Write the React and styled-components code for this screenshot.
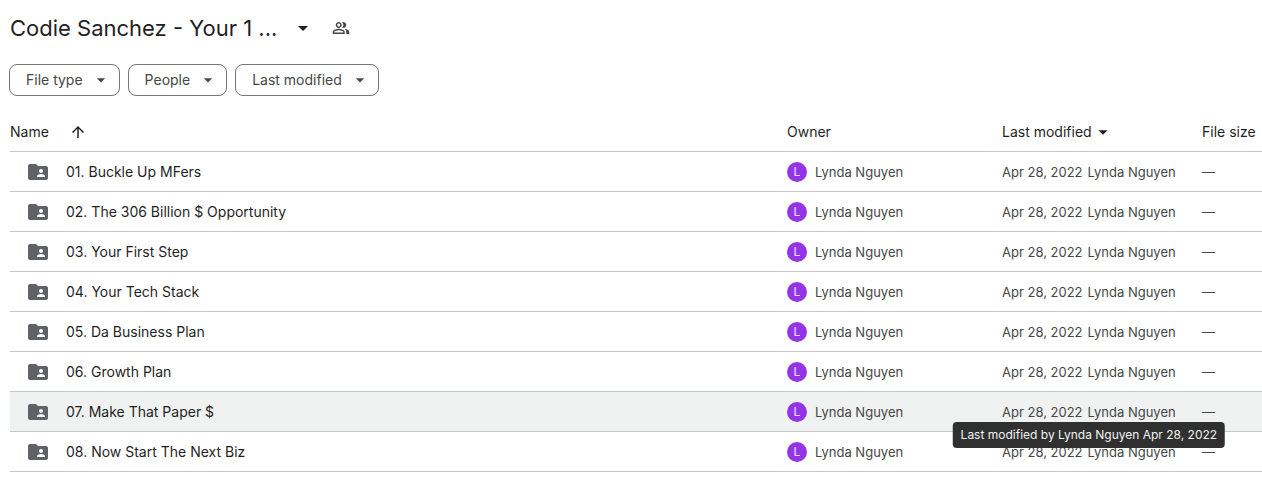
import React from "react";
import styled, { createGlobalStyle } from "styled-components";
import { MdArrowDropDown, MdArrowUpward, MdOutlinePeopleAlt } from "react-icons/md";

const GlobalStyle = createGlobalStyle`
  * {
    box-sizing: border-box;
  }
  body {
    margin: 0;
    background-color: #fff;
    color: #1f1f1f;
    font-family: Inter, Roboto, sans-serif;
    font-size: 14px;
    line-height: 20px;
  }
  button {
    border: 0;
    padding: 0;
    background: none;
    color: inherit;
    font: inherit;
    cursor: pointer;
  }
  svg {
    display: block;
    flex: none;
  }
`;
const Page = styled.main`
  padding-left: 10px;
`;
const TitleBar = styled.header`
  display: flex;
  align-items: center;
  gap: 17px;
  height: 56px;
`;
const TitleButton = styled.button`
  display: flex;
  align-items: center;
  gap: 14px;
`;
const Title = styled.h1`
  margin: 0;
  font-size: 22px;
  font-weight: 400;
  line-height: 32px;
  white-space: nowrap;
`;
const ShareButton = styled.button`
  color: #444746;
`;
const Filters = styled.div`
  display: flex;
  gap: 8px;
  margin: 8px 0 16px -1px;
`;
const Chip = styled.button`
  display: flex;
  align-items: center;
  gap: 8px;
  height: 32px;
  padding: 0 8px 0 16px;
  border: 1px solid #747775;
  border-radius: 8px;
  color: #444746;
  white-space: nowrap;
`;
const FileTable = styled.table`
  width: 100%;
  table-layout: fixed;
  border-collapse: separate;
  border-spacing: 0;
`;
const HeadCell = styled.th`
  width: ${(props) => props.$width || "auto"};
  height: 40px;
  padding: 0;
  border-bottom: 1px solid #c7c7c7;
  font-weight: 400;
  text-align: left;
  white-space: nowrap;
`;
const SortButton = styled.button`
  display: flex;
  align-items: center;
  gap: ${(props) => props.$gap || "0"};
`;
const Row = styled.tr`
  background-color: ${(props) => (props.$active ? "#f0f1f1" : "transparent")};
`;
const Cell = styled.td`
  height: 40px;
  padding: 0;
  border-bottom: 1px solid #c7c7c7;
  color: #444746;
  font-size: 13px;
  white-space: nowrap;
`;
const FileName = styled.div`
  display: flex;
  align-items: center;
  gap: 16px;
  padding-left: 16px;
  color: #1f1f1f;
  font-size: 14px;
`;
const FolderSvg = styled.svg`
  width: 24px;
  height: 24px;
  fill: #5f6368;
`;
const Owner = styled.div`
  display: flex;
  align-items: center;
  gap: 8px;
`;
const Avatar = styled.span`
  width: 20px;
  height: 20px;
  border-radius: 50%;
  background-color: #9334e6;
  color: #f0e0fc;
  font-size: 12px;
  text-align: center;
`;
const Modified = styled.div`
  position: relative;
  display: inline-flex;
  gap: 5px;
`;
const Tooltip = styled.span`
  position: absolute;
  z-index: 1;
  top: 100%;
  left: 50%;
  transform: translateX(-50%);
  padding: 3px 8px;
  border-radius: 4px;
  background-color: #303030;
  color: #f2f2f2;
  font-size: 12px;
`;

const filters = ["File type", "People", "Last modified"];

const folders = [
  "01. Buckle Up MFers",
  "02. The 306 Billion $ Opportunity",
  "03. Your First Step",
  "04. Your Tech Stack",
  "05. Da Business Plan",
  "06. Growth Plan",
  "07. Make That Paper $",
  "08. Now Start The Next Biz",
];

const owner = "Lynda Nguyen";
const modified = "Apr 28, 2022";

const SharedFolderIcon = () => (
  <FolderSvg viewBox="0 0 24 24" aria-hidden="true">
    <path d="M20 6h-8l-2-2H4c-1.1 0-1.99.9-1.99 2L2 18c0 1.1.9 2 2 2h16c1.1 0 2-.9 2-2V8c0-1.1-.9-2-2-2zm-5 3c1.1 0 2 .9 2 2s-.9 2-2 2-2-.9-2-2 .9-2 2-2zm4 8h-8v-1c0-1.33 2.67-2 4-2s4 .67 4 2v1z" />
  </FolderSvg>
);

const FolderRow = ({ name, active }) => (
  <Row $active={active}>
    <Cell>
      <FileName>
        <SharedFolderIcon />
        {name}
      </FileName>
    </Cell>
    <Cell>
      <Owner>
        <Avatar aria-hidden="true">L</Avatar>
        {owner}
      </Owner>
    </Cell>
    <Cell>
      <Modified>
        <span>{modified}</span>
        <span>{owner}</span>
        {active && <Tooltip role="tooltip">{`Last modified by ${owner} ${modified}`}</Tooltip>}
      </Modified>
    </Cell>
    <Cell>—</Cell>
  </Row>
);

const App = () => {
  return (
    <Page>
      <GlobalStyle />
      <TitleBar>
        <TitleButton>
          <Title>Codie Sanchez - Your 1 ...</Title>
          <MdArrowDropDown size={24} />
        </TitleButton>
        <ShareButton aria-label="Manage access">
          <MdOutlinePeopleAlt size={18} />
        </ShareButton>
      </TitleBar>
      <Filters>
        {filters.map((label) => (
          <Chip key={label}>
            {label}
            <MdArrowDropDown size={20} />
          </Chip>
        ))}
      </Filters>
      <FileTable>
        <thead>
          <tr>
            <HeadCell>
              <SortButton $gap="20px">
                Name
                <MdArrowUpward size={18} />
              </SortButton>
            </HeadCell>
            <HeadCell $width="215px">Owner</HeadCell>
            <HeadCell $width="200px">
              <SortButton>
                Last modified
                <MdArrowDropDown size={22} />
              </SortButton>
            </HeadCell>
            <HeadCell $width="60px">File size</HeadCell>
          </tr>
        </thead>
        <tbody>
          {folders.map((name) => (
            <FolderRow key={name} name={name} active={name.startsWith("07")} />
          ))}
        </tbody>
      </FileTable>
    </Page>
  );
};

export default App;
